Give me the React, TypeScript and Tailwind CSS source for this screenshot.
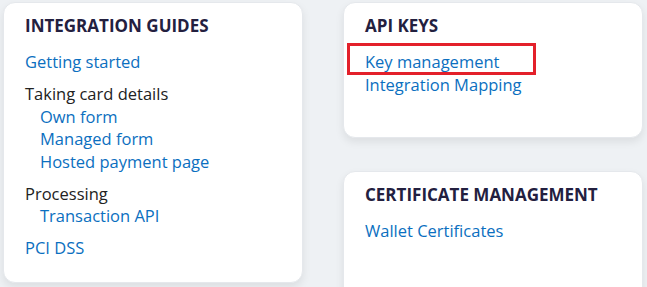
import React from 'react';

const font = { fontFamily: '"Open Sans", "Noto Sans", sans-serif' };

const Heading: React.FC<{ children: React.ReactNode }> = ({ children }) => (
  <h3 className="text-[17px] leading-[24px] font-bold uppercase text-[#23203f]">{children}</h3>
);

const Link: React.FC<{ children: React.ReactNode; indent?: boolean }> = ({ children, indent }) => (
  <a href="#" className={`block text-[16.5px] leading-[22.5px] text-[#0b6fc0] ${indent ? 'pl-[15px]' : ''}`}>
    {children}
  </a>
);

const Card: React.FC<{ className?: string; children: React.ReactNode }> = ({ className = '', children }) => (
  <div className={`w-[300px] shrink-0 rounded-[12px] bg-white shadow-[0_4px_8px_rgba(0,0,0,0.08)] border border-[#e5e8ec] pt-[11px] pl-[21px] ${className}`}>
    {children}
  </div>
);

export default function App() {
  return (
    <div className="w-[647px] h-[287px] overflow-hidden bg-[#eef1f4] pl-[3px] pt-[2px] flex items-start gap-[40px]" style={font}>
      {/* INTEGRATION GUIDES */}
      <Card className="h-[281px]">
        <Heading>Integration Guides</Heading>
        <div className="mt-[13px] flex flex-col gap-[9.5px]">
          <Link>Getting started</Link>
          <div>
            <div className="text-[16.5px] leading-[22.5px] text-[#222]">Taking card details</div>
            <Link indent>Own form</Link>
            <Link indent>Managed form</Link>
            <Link indent>Hosted payment page</Link>
          </div>
          <div>
            <div className="text-[16.5px] leading-[22.5px] text-[#222]">Processing</div>
            <Link indent>Transaction API</Link>
          </div>
          <Link>PCI DSS</Link>
        </div>
      </Card>

      <div className="flex flex-col gap-[33px] shrink-0">
        {/* API KEYS */}
        <Card className="h-[136px] relative">
          <Heading>API Keys</Heading>
          <div className="mt-[13px]">
            <Link>Key management</Link>
            <Link>Integration Mapping</Link>
          </div>
          {/* annotation box */}
          <div className="absolute left-[3px] top-[40px] w-[189px] h-[32px] border-[3px] border-[#e3202a]" />
        </Card>

        {/* CERTIFICATE MANAGEMENT */}
        <Card className="h-[140px]">
          <Heading>Certificate Management</Heading>
          <div className="mt-[13px]">
            <Link>Wallet Certificates</Link>
          </div>
        </Card>
      </div>
    </div>
  );
}
